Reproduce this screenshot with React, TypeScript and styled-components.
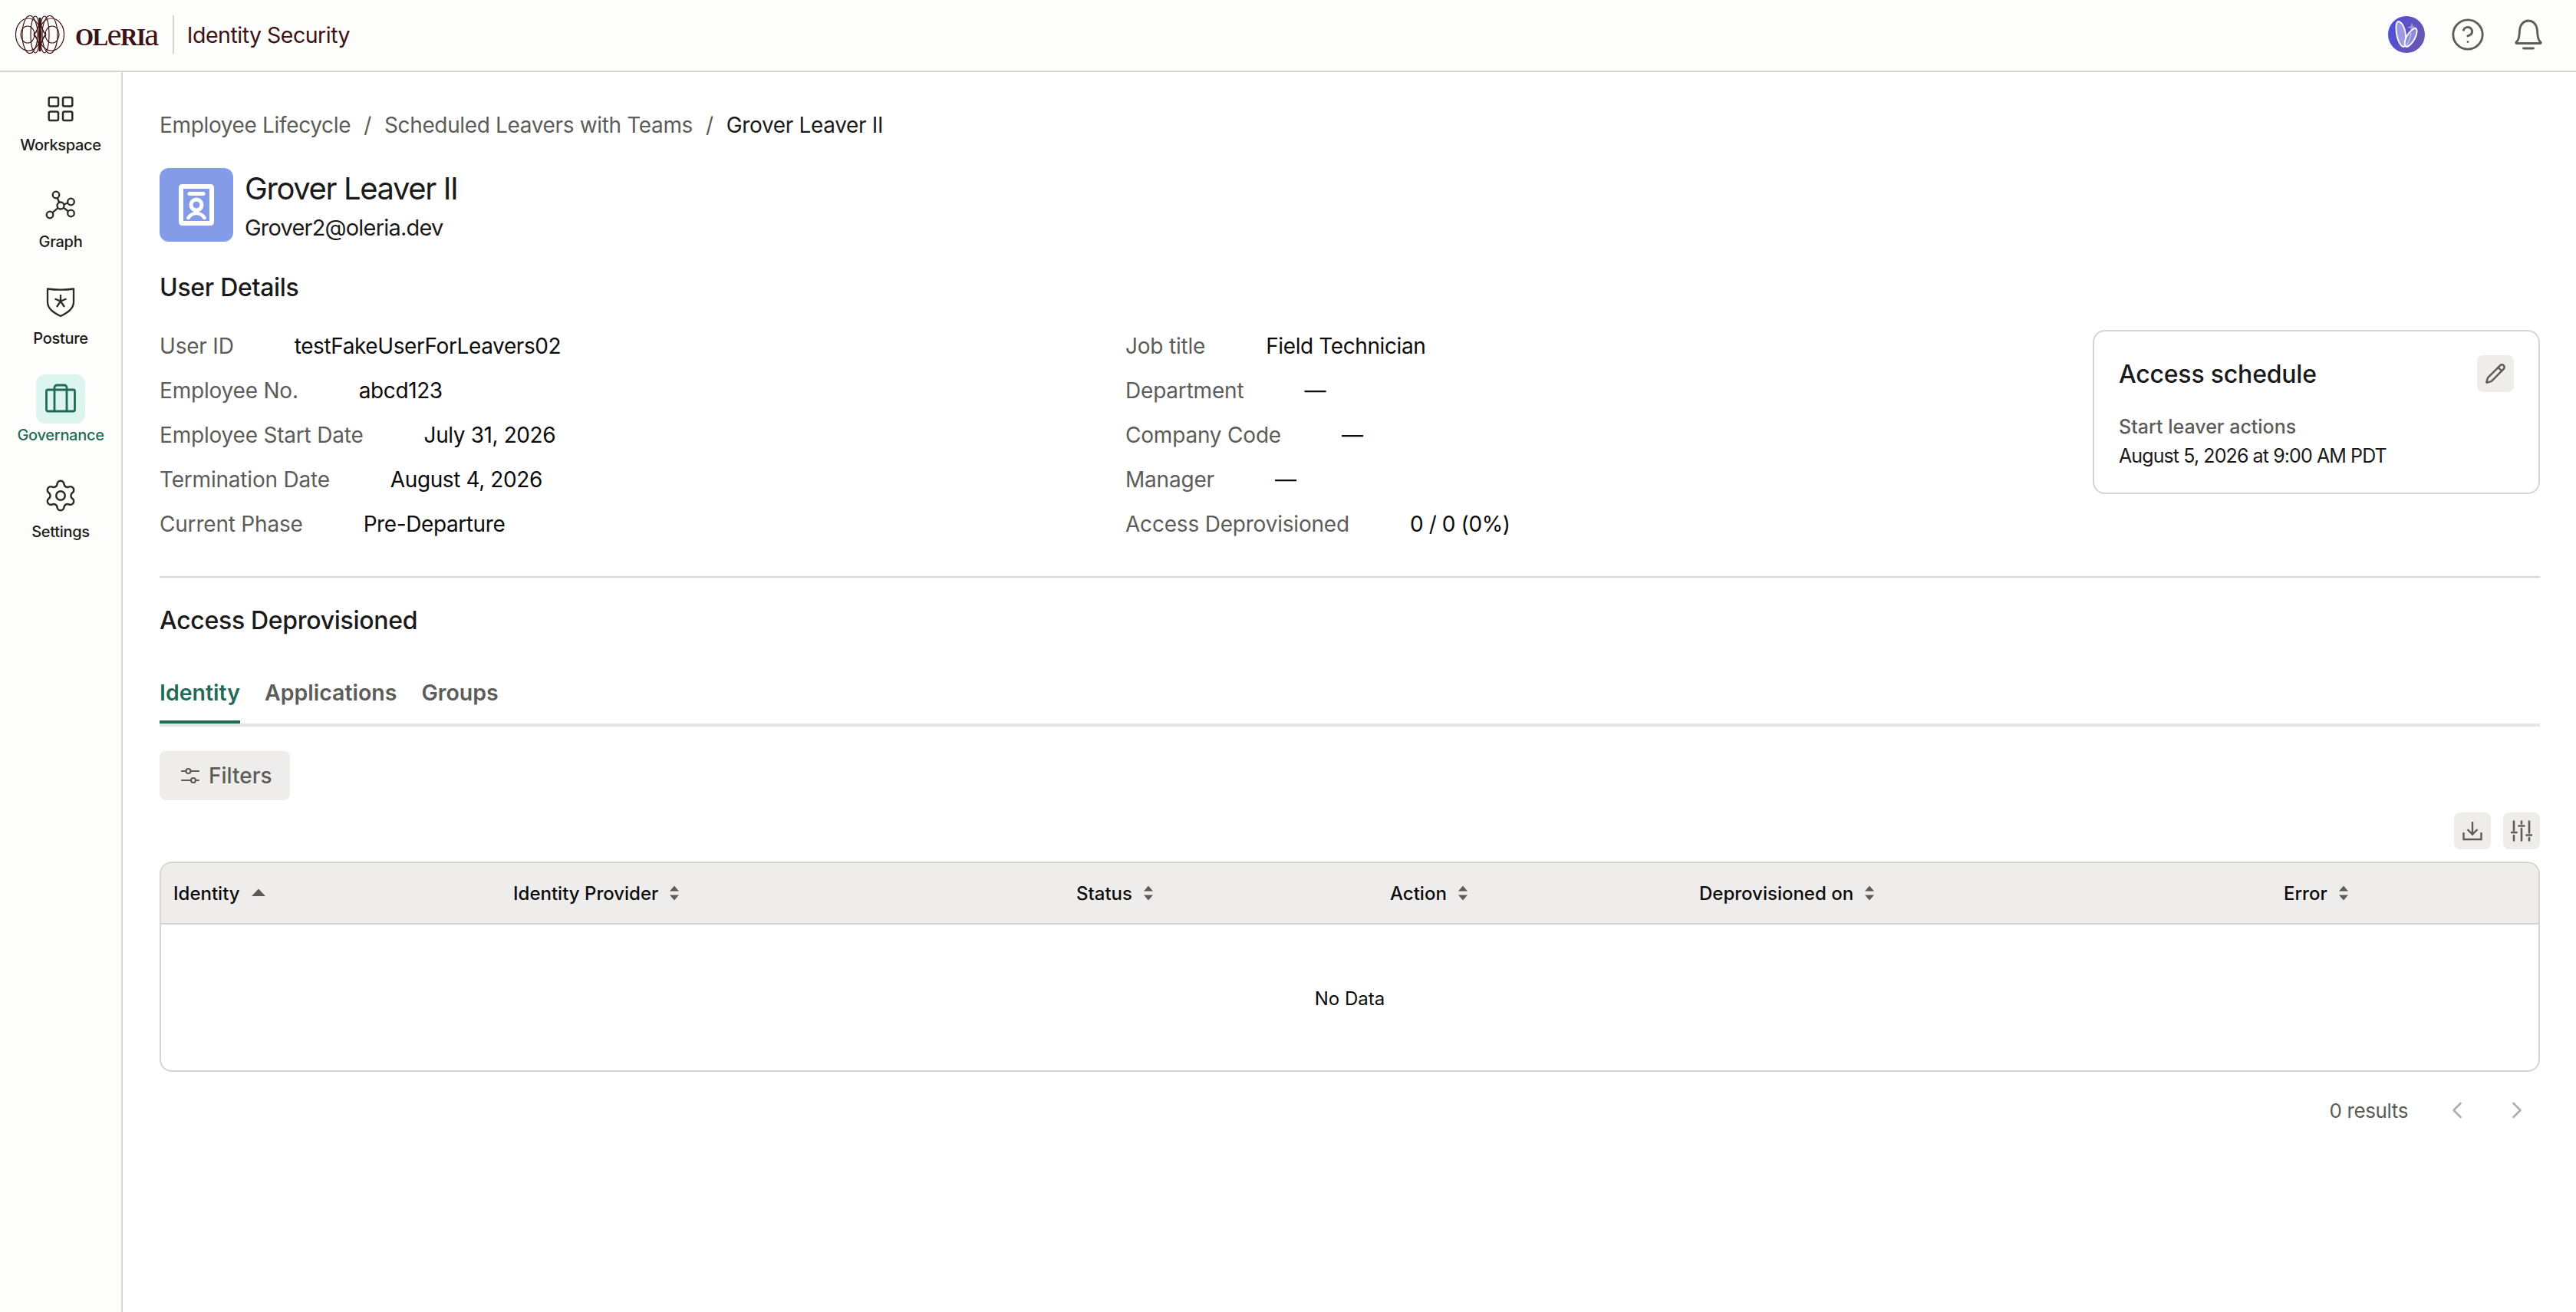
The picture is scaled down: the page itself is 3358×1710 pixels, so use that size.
import React from 'react';
import styled, { createGlobalStyle } from 'styled-components';
import { ChevronLeft, ChevronRight, CircleHelp, Pencil, Settings } from 'lucide-react';

const GlobalStyle = createGlobalStyle`
  html, body {
    margin: 0;
    padding: 0;
    background: #fff;
  }
  body {
    font-family: Inter, "Noto Sans", sans-serif;
    overflow: hidden;
    -webkit-font-smoothing: antialiased;
  }
  * { box-sizing: border-box; }
`;

const Page = styled.div`
  width: 3358px;
  height: 1710px;
  display: flex;
  flex-direction: column;
`;

const TopBar = styled.header`
  height: 94px;
  flex: none;
  display: flex;
  align-items: center;
  justify-content: space-between;
  padding: 0 43px 2px 20px;
  background: #fdfdfb;
  border-bottom: 2px solid #d4d4d0;
`;

const Brand = styled.div`
  display: flex;
  align-items: center;
`;

const Wordmark = styled.div`
  display: flex;
  align-items: baseline;
  height: 48px;
  line-height: 48px;
  margin-left: 14px;
  font-family: "Liberation Serif", serif;
  font-size: 31px;
  font-weight: 700;
  letter-spacing: -1.6px;
  color: #3d1212;
`;

const WordmarkLower = styled.span`
  font-size: 43px;
  font-weight: 400;
`;

const BrandDivider = styled.div`
  width: 2px;
  height: 50px;
  margin: 0 17px 0 19px;
  background: #d4d4d0;
`;

const Product = styled.div`
  font-size: 28.5px;
  letter-spacing: -0.5px;
  color: #3d1212;
`;

const TopActions = styled.div`
  display: flex;
  align-items: center;
  color: #5c5c58;
`;

const HelpIcon = styled(CircleHelp)`
  margin-left: 33px;
`;

const BellIcon = styled.svg`
  margin-left: 37px;
`;

const Body = styled.div`
  flex: 1;
  display: flex;
  min-height: 0;
`;

const Sidebar = styled.nav`
  width: 160px;
  flex: none;
  padding-top: 16px;
  display: flex;
  flex-direction: column;
  align-items: center;
  gap: 32px;
  background: #fdfdfb;
  border-right: 2px solid #d4d4d0;
`;

const NavItem = styled.div`
  display: flex;
  flex-direction: column;
  align-items: center;
`;

const NavIcon = styled.div<{ $active?: boolean }>`
  width: 64px;
  height: 64px;
  border-radius: 12px;
  display: flex;
  align-items: center;
  justify-content: center;
  color: ${p => (p.$active ? '#1f6b57' : '#2a2a28')};
  background: ${p => (p.$active ? '#ddf5ef' : 'transparent')};
`;

const NavLabel = styled.div<{ $active?: boolean }>`
  font-size: 20px;
  line-height: 30px;
  letter-spacing: -0.3px;
  font-weight: 500;
  white-space: nowrap;
  color: ${p => (p.$active ? '#1f6b57' : '#1c1c1a')};
`;

const Main = styled.main`
  flex: 1;
  min-width: 0;
  padding: 49px 47px 0 48px;
  background: #fff;
`;

const Breadcrumbs = styled.div`
  display: flex;
  font-size: 28px;
  line-height: 40px;
  letter-spacing: -0.35px;
  color: #5c5c58;
`;

const Crumb = styled.span<{ $current?: boolean }>`
  color: ${p => (p.$current ? '#1a1a1a' : '#5c5c58')};
`;

const CrumbSep = styled.span`
  margin: 0 17px;
`;

const UserHead = styled.div`
  display: flex;
  margin-top: 36px;
`;

const Avatar = styled.div`
  width: 96px;
  height: 96px;
  border-radius: 12px;
  background: #849ce8;
  display: flex;
  align-items: center;
  justify-content: center;
`;

const UserText = styled.div`
  margin-left: 15px;
`;

const UserName = styled.div`
  font-size: 40px;
  line-height: 54px;
  letter-spacing: -1.4px;
  color: #1a1a1a;
`;

const UserMail = styled.div`
  font-size: 29px;
  line-height: 48px;
  letter-spacing: -0.8px;
  color: #1a1a1a;
`;

const SectionTitle = styled.h2`
  margin: 32px 0 0;
  font-size: 32px;
  line-height: 44px;
  font-weight: 500;
  letter-spacing: -0.3px;
  color: #1a1a1a;
`;

const Details = styled.div`
  display: flex;
  align-items: flex-start;
  margin-top: 25px;
`;

const DetailColumn = styled.div<{ $width: number }>`
  width: ${p => p.$width}px;
  flex: none;
`;

const DetailRow = styled.div`
  height: 58px;
  display: flex;
  align-items: center;
  gap: 79px;
  font-size: 28px;
  white-space: nowrap;
`;

const DetailLabel = styled.span`
  letter-spacing: -0.2px;
  color: #5c5c58;
`;

const DetailValue = styled.span`
  letter-spacing: -0.4px;
  color: #0b0b0b;
`;

const ScheduleCard = styled.div`
  width: 583px;
  height: 214px;
  margin-top: 8px;
  padding: 31px 32px 0 32px;
  border: 2px solid #d4d4d0;
  border-radius: 16px;
`;

const CardHead = styled.div`
  display: flex;
  align-items: center;
  justify-content: space-between;
  height: 48px;
`;

const CardTitle = styled.div`
  font-size: 32px;
  font-weight: 500;
  letter-spacing: -0.2px;
  color: #1a1a1a;
`;

const IconButton = styled.div`
  width: 48px;
  height: 48px;
  border-radius: 8px;
  background: #eeedeb;
  color: #5c5c58;
  display: flex;
  align-items: center;
  justify-content: center;
`;

const CardLabel = styled.div`
  margin-top: 26px;
  font-size: 25px;
  line-height: 38px;
  font-weight: 500;
  color: #5c5c58;
`;

const CardValue = styled.div`
  font-size: 25px;
  line-height: 38px;
  letter-spacing: -0.9px;
  color: #1a1a1a;
`;

const Divider = styled.hr`
  margin: 39px 0 0;
  border: 0;
  height: 2px;
  background: #d4d4d0;
`;

const DeprovTitle = styled(SectionTitle)`
  margin-top: 34px;
`;

const Tabs = styled.div`
  display: flex;
  gap: 32px;
  margin-top: 30px;
  border-bottom: 4px solid #e6e6e1;
`;

const Tab = styled.div<{ $active?: boolean }>`
  height: 82px;
  padding-top: 22px;
  font-size: 28.5px;
  line-height: 40px;
  font-weight: 600;
  color: ${p => (p.$active ? '#1f6b57' : '#5c5c58')};
  border-bottom: 4px solid ${p => (p.$active ? '#1f6b57' : 'transparent')};
`;

const FilterButton = styled.div`
  width: 170px;
  height: 64px;
  margin-top: 32px;
  padding-left: 28px;
  display: flex;
  align-items: center;
  gap: 12px;
  border-radius: 8px;
  background: #eeedeb;
  font-size: 28px;
  font-weight: 500;
  color: #5c5c58;
`;

const TableTools = styled.div`
  display: flex;
  justify-content: flex-end;
  gap: 16px;
  margin-top: 16px;
`;

const TableBox = styled.div`
  margin-top: 16px;
  height: 274px;
  border: 2px solid #d4d4d0;
  border-radius: 16px;
  overflow: hidden;
`;

const TableHead = styled.div`
  height: 80px;
  display: grid;
  grid-template-columns: 443px 734px 409px 403px 762px 1fr;
  align-items: center;
  padding-left: 16px;
  background: #eeedeb;
  border-bottom: 2px solid #d4d4d0;
`;

const HeadCell = styled.div`
  display: flex;
  align-items: center;
  gap: 14px;
  font-size: 24px;
  font-weight: 500;
  white-space: nowrap;
  color: #0b0b0b;
`;

const EmptyRow = styled.div`
  height: 192px;
  display: flex;
  align-items: center;
  justify-content: center;
  font-size: 24px;
  color: #0b0b0b;
`;

const Pager = styled.div`
  display: flex;
  align-items: center;
  justify-content: flex-end;
  margin-top: 30px;
  padding-right: 12px;
  height: 40px;
  color: #b0afaa;
`;

const PagerCount = styled.span`
  margin-right: 46px;
  font-size: 26px;
  letter-spacing: -0.4px;
  color: #5c5c58;
`;

const PrevIcon = styled(ChevronLeft)`
  margin-right: 42px;
`;

const Logo = () => (
  <svg width="64" height="50" viewBox="0 0 64 50" fill="none" stroke="#3d1212" strokeWidth="1.2">
    <ellipse cx="17" cy="25" rx="16.5" ry="21" />
    <ellipse cx="47" cy="25" rx="16.5" ry="21" />
    <ellipse cx="19" cy="25" rx="10" ry="24.5" />
    <ellipse cx="45" cy="25" rx="10" ry="24.5" />
    <ellipse cx="16" cy="25" rx="9" ry="11" />
    <ellipse cx="48" cy="25" rx="9" ry="11" />
    <ellipse cx="26" cy="25" rx="6" ry="24" />
    <ellipse cx="38" cy="25" rx="6" ry="24" />
    <path d="M32 3v44" strokeWidth="3" />
    <path d="M32 8C30 16 28 22 24 25M32 8C34 16 36 22 40 25M32 42C30 34 28 28 24 25M32 42C34 34 36 28 40 25" strokeWidth="1.6" />
  </svg>
);

const AiBadge = () => (
  <svg width="48" height="48" viewBox="0 0 48 48">
    <defs>
      <linearGradient id="aiFill" x1="0" y1="0" x2="1" y2="0.4">
        <stop offset="0" stopColor="#4b4edb" />
        <stop offset="1" stopColor="#6a55b5" />
      </linearGradient>
    </defs>
    <circle cx="24" cy="24" r="24" fill="url(#aiFill)" />
    <path d="M31 8.5l1.6 4.4 4.4 1.6-4.4 1.6L31 20.5l-1.6-4.4-4.4-1.6 4.4-1.6z" fill="#9a97e6" />
    <path d="M13 7c5 0 9 8 10 17 .7 7 0 15-2.500 16-4 0-8-8-9.500-17C10 15 10.500 8 13 7z" fill="#9d9be4" stroke="#fff" strokeWidth="1.800" />
    <path d="M36 16c2.500 1 2 7-1 13-3 6-8 11-11.500 11-2.500-1-2.500-7 .5-13 3-6 8.500-11.500 12-11z" fill="#8d8adf" stroke="#fff" strokeWidth="1.800" />
    <path d="M23 40c3-5 6-11 7-18" fill="none" stroke="#fff" strokeWidth="1" opacity="0.7" />
  </svg>
);

const WorkspaceIcon = () => (
  <svg width="48" height="48" viewBox="0 0 48 48" fill="none" stroke="currentColor" strokeWidth="2.500">
    <rect x="8.700" y="9" width="12.300" height="11.500" rx="2" />
    <rect x="27" y="9" width="12.300" height="11.500" rx="2" />
    <rect x="8.700" y="27.500" width="12.300" height="11.500" rx="2" />
    <rect x="27" y="27.500" width="12.300" height="11.500" rx="2" />
  </svg>
);

const GraphIcon = () => (
  <svg width="48" height="48" viewBox="0 0 48 48" fill="none" stroke="currentColor" strokeWidth="2.300">
    <circle cx="24" cy="24" r="4.500" />
    <circle cx="18" cy="10" r="4.300" />
    <circle cx="37.500" cy="19" r="4.300" />
    <circle cx="37.500" cy="34" r="4.300" />
    <circle cx="10" cy="36" r="4.300" />
    <path d="M19.800 14l2.400 5.800M28.300 22.500l5-2M27.800 26.800l6 4.400M20.600 27l-7.200 6.200" />
  </svg>
);

const PostureIcon = () => (
  <svg width="48" height="48" viewBox="0 0 48 48" fill="none" stroke="currentColor" strokeWidth="2.300">
    <path d="M7 6.500c11 1.500 23 1.500 34 0v17c0 8.500-7 13.500-17 18.500C14 37 7 32 7 23.500z" strokeLinejoin="round" />
    <path d="M24 14v8.500M16.500 19.500l7.500 3 7.500-3M19 30l5-7.500 5 7.500" />
  </svg>
);

const GovernanceIcon = () => (
  <svg width="48" height="48" viewBox="0 0 48 48" fill="none" stroke="currentColor" strokeWidth="2.800">
    <rect x="5.500" y="12" width="37" height="28" rx="2" />
    <path d="M16 40V9a3 3 0 0 1 3-3h10a3 3 0 0 1 3 3v31" />
  </svg>
);

const IdBadge = () => (
  <svg width="46" height="54" viewBox="0 0 46 54" fill="none" stroke="#fff">
    <rect x="3" y="3" width="40" height="48" rx="1.500" strokeWidth="6" fill="#849ce8" />
    <path d="M14 12.500h18" strokeWidth="5" strokeLinecap="round" />
    <circle cx="23" cy="27" r="7" strokeWidth="5" />
    <path d="M12.500 44c3-4.500 6-6 10.500-6s7.500 1.500 10.500 6" strokeWidth="4.500" strokeLinecap="round" />
  </svg>
);

const Bell = () => (
  <BellIcon width="38" height="40" viewBox="0 0 38 40" fill="none" stroke="currentColor" strokeWidth="2.800" strokeLinecap="round" strokeLinejoin="round">
    <path d="M3 30c2.500-2 3.500-4.500 4-9l.6-7C8.300 6.500 13 2 19 2s10.700 4.500 11.400 12l.6 7c.5 4.500 1.500 7 4 9 .6 1-.1 1.500-1 1.500H4c-.9 0-1.600-.5-1-1.500z" />
    <path d="M12.500 38h13" />
  </BellIcon>
);

const SlidersIcon = () => (
  <svg width="24" height="24" viewBox="0 0 24 24" fill="none" stroke="currentColor" strokeWidth="2.200" strokeLinecap="round">
    <path d="M1 6h5M13 6h10M1 18h12M19 18h4" />
    <circle cx="9.500" cy="6" r="3" />
    <circle cx="16" cy="18" r="3" />
  </svg>
);

const DownloadIcon = () => (
  <svg width="26" height="26" viewBox="0 0 26 26" fill="none" stroke="currentColor" strokeWidth="2.400">
    <path d="M1.500 15v9h23v-9" />
    <path d="M13 1v16M6.500 11l6.500 6.500 6.500-6.500" />
  </svg>
);

const ColumnsIcon = () => (
  <svg width="28" height="28" viewBox="0 0 28 28" fill="none" stroke="currentColor" strokeWidth="2.600" strokeLinecap="round">
    <path d="M4 1.500v12M4 20v6.500M14 1.500v3M14 11v15.500M24 1.500v15M24 23v3.500" />
    <path d="M.500 16h7M10.500 7.500h7M20.500 19.500h7" />
  </svg>
);

const SortIcon = ({ only }: { only?: boolean }) => (
  <svg width={only ? 20 : 14} height="24" viewBox={only ? '0 0 20 24' : '0 0 14 24'} fill="#5c5c58">
    {only ? (
      <path d="M10 6.500l9 9.500H1z" />
    ) : (
      <>
        <path d="M7 2.500l6 7H1z" />
        <path d="M7 21.500l-6-7h12z" />
      </>
    )}
  </svg>
);

const navItems = [
  { label: 'Workspace', icon: <WorkspaceIcon /> },
  { label: 'Graph', icon: <GraphIcon /> },
  { label: 'Posture', icon: <PostureIcon /> },
  { label: 'Governance', icon: <GovernanceIcon />, active: true },
  { label: 'Settings', icon: <Settings size={46} strokeWidth={1.3} /> },
];

const leftDetails = [
  ['User ID', 'testFakeUserForLeavers02'],
  ['Employee No.', 'abcd123'],
  ['Employee Start Date', 'July 31, 2026'],
  ['Termination Date', 'August 4, 2026'],
  ['Current Phase', 'Pre-Departure'],
];

const rightDetails = [
  ['Job title', 'Field Technician'],
  ['Department', '—'],
  ['Company Code', '—'],
  ['Manager', '—'],
  ['Access Deprovisioned', '0 / 0 (0%)'],
];

const columns = ['Identity', 'Identity Provider', 'Status', 'Action', 'Deprovisioned on', 'Error'];

export default function App() {
  return (
    <Page>
      <GlobalStyle />
      <TopBar>
        <Brand>
          <Logo />
          <Wordmark>
            OL<WordmarkLower>e</WordmarkLower>RI<WordmarkLower>a</WordmarkLower>
          </Wordmark>
          <BrandDivider />
          <Product>Identity Security</Product>
        </Brand>
        <TopActions>
          <AiBadge />
          <HelpIcon size={46} strokeWidth={1.5} />
          <Bell />
        </TopActions>
      </TopBar>
      <Body>
        <Sidebar>
          {navItems.map(item => (
            <NavItem key={item.label}>
              <NavIcon $active={item.active}>{item.icon}</NavIcon>
              <NavLabel $active={item.active}>{item.label}</NavLabel>
            </NavItem>
          ))}
        </Sidebar>
        <Main>
          <Breadcrumbs>
            <Crumb>Employee Lifecycle</Crumb>
            <CrumbSep>/</CrumbSep>
            <Crumb>Scheduled Leavers with Teams</Crumb>
            <CrumbSep>/</CrumbSep>
            <Crumb $current>Grover Leaver II</Crumb>
          </Breadcrumbs>
          <UserHead>
            <Avatar>
              <IdBadge />
            </Avatar>
            <UserText>
              <UserName>Grover Leaver II</UserName>
              <UserMail>Grover2@oleria.dev</UserMail>
            </UserText>
          </UserHead>
          <SectionTitle>User Details</SectionTitle>
          <Details>
            <DetailColumn $width={1259}>
              {leftDetails.map(([label, value]) => (
                <DetailRow key={label}>
                  <DetailLabel>{label}</DetailLabel>
                  <DetailValue>{value}</DetailValue>
                </DetailRow>
              ))}
            </DetailColumn>
            <DetailColumn $width={1261}>
              {rightDetails.map(([label, value]) => (
                <DetailRow key={label}>
                  <DetailLabel>{label}</DetailLabel>
                  <DetailValue>{value}</DetailValue>
                </DetailRow>
              ))}
            </DetailColumn>
            <ScheduleCard>
              <CardHead>
                <CardTitle>Access schedule</CardTitle>
                <IconButton>
                  <Pencil size={28} strokeWidth={2.1} />
                </IconButton>
              </CardHead>
              <CardLabel>Start leaver actions</CardLabel>
              <CardValue>August 5, 2026 at 9:00 AM PDT</CardValue>
            </ScheduleCard>
          </Details>
          <Divider />
          <DeprovTitle>Access Deprovisioned</DeprovTitle>
          <Tabs>
            <Tab $active>Identity</Tab>
            <Tab>Applications</Tab>
            <Tab>Groups</Tab>
          </Tabs>
          <FilterButton>
            <SlidersIcon />
            Filters
          </FilterButton>
          <TableTools>
            <IconButton>
              <DownloadIcon />
            </IconButton>
            <IconButton>
              <ColumnsIcon />
            </IconButton>
          </TableTools>
          <TableBox>
            <TableHead>
              {columns.map((col, i) => (
                <HeadCell key={col}>
                  {col}
                  <SortIcon only={i === 0} />
                </HeadCell>
              ))}
            </TableHead>
            <EmptyRow>No Data</EmptyRow>
          </TableBox>
          <Pager>
            <PagerCount>0 results</PagerCount>
            <PrevIcon size={36} strokeWidth={1.8} />
            <ChevronRight size={36} strokeWidth={1.8} />
          </Pager>
        </Main>
      </Body>
    </Page>
  );
}
